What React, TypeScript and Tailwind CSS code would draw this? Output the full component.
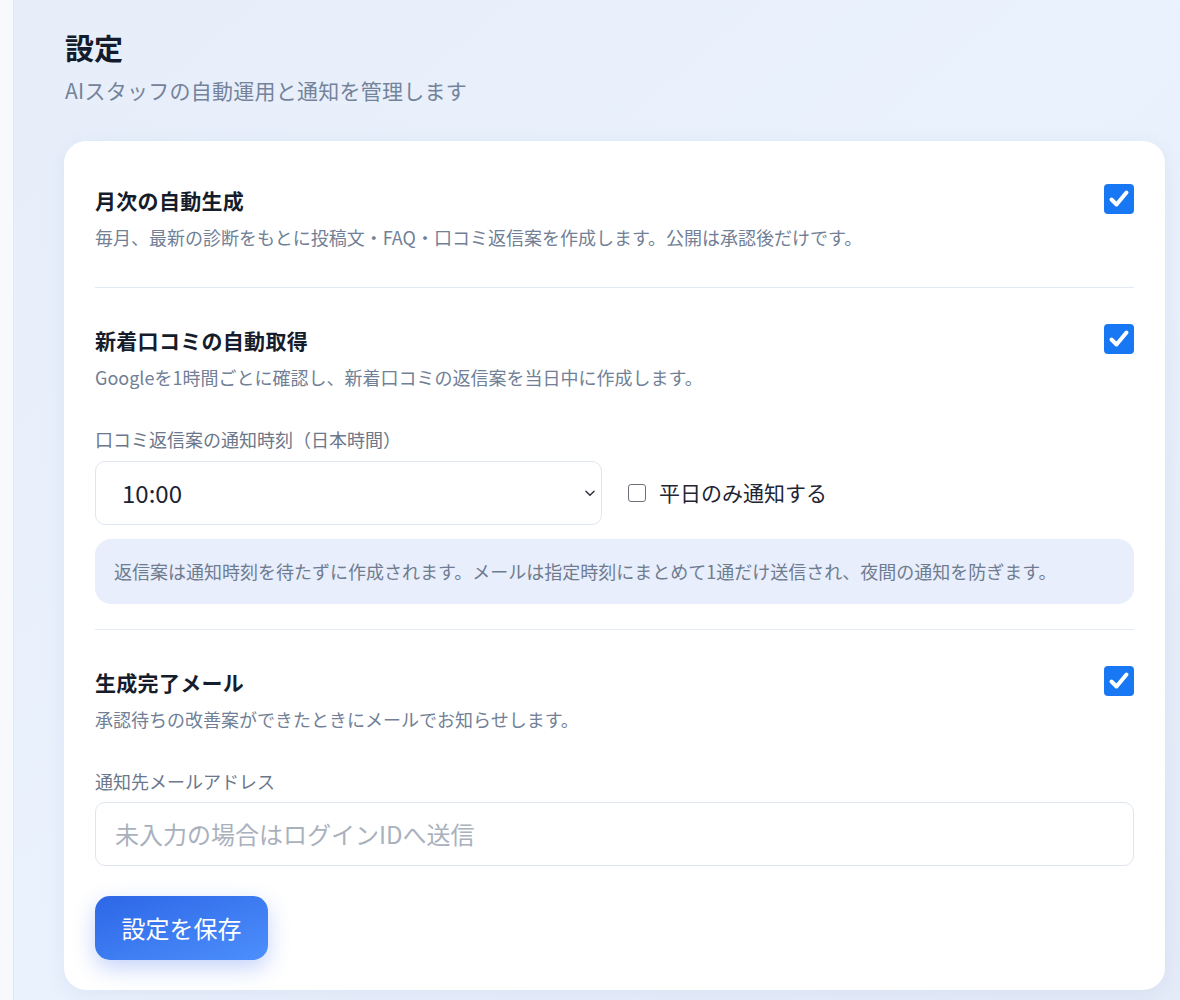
import React from "react";

const font = { fontFamily: '"Noto Sans CJK JP", "Noto Sans", sans-serif' };

function BigCheck() {
  return (
    <div className="w-[30px] h-[30px] rounded-[4px] bg-[#1877f2] flex items-center justify-center shrink-0">
      <svg width="24" height="24" viewBox="0 0 24 24" fill="none">
        <path d="M4.5 12.5l5 5L19.5 5.5" stroke="white" strokeWidth="4" strokeLinecap="round" strokeLinejoin="round" />
      </svg>
    </div>
  );
}

function Section({ title, desc, children }: { title: string; desc: string; children?: React.ReactNode }) {
  return (
    <div>
      <div className="flex items-start justify-between">
        <div>
          <div className="text-[21px] font-bold text-[#151c2b] leading-[30px] tracking-[0.3px]">{title}</div>
          <div className="mt-[9px] text-[18px] text-[#718096] leading-[26px]">{desc}</div>
        </div>
        <div className="-mt-[1px]"><BigCheck /></div>
      </div>
      {children}
    </div>
  );
}

export default function App() {
  return (
    <div style={font} className="flex w-[1180px] h-[1000px] overflow-hidden">
      <div className="w-[14px] shrink-0 bg-[#f7f9fd] border-r border-[#e2e8f2]" />
      <div className="flex-1 bg-gradient-to-br from-[#e7eefa] via-[#eaf2fd] to-[#e4ebf8] pl-[51px] pr-[15px] pt-[27px]">
        <h1 className="text-[29px] font-bold text-[#141b2b] leading-[40px]">設定</h1>
        <p className="mt-[8px] text-[21px] text-[#74839a] leading-[30px] tracking-[0.25px]">AIスタッフの自動運用と通知を管理します</p>
        <div className="mt-[36px] bg-white rounded-[22px] shadow-[0_4px_20px_rgba(120,140,190,0.12)] pl-[31px] pr-[31px] pt-[44px] pb-[30px] -ml-[1px]">
          <Section title="月次の自動生成" desc="毎月、最新の診断をもとに投稿文・FAQ・口コミ返信案を作成します。公開は承認後だけです。" />
          <div className="h-px bg-[#e4eaf3] mt-[37px] mb-[37px]" />
          <Section title="新着口コミの自動取得" desc="Googleを1時間ごとに確認し、新着口コミの返信案を当日中に作成します。">
            <div className="mt-[36px] text-[18px] text-[#6b778a] leading-[26px]">口コミ返信案の通知時刻（日本時間）</div>
            <div className="mt-[9px] flex items-center gap-[26px]">
              <div className="w-[507px] h-[64px] rounded-[10px] border border-[#dfe6f2] flex items-center justify-between pl-[26px] pr-[2px]">
                <span className="text-[24px] text-[#1a2233]">10:00</span>
                <svg width="14" height="14" viewBox="0 0 24 24" fill="none" className="mr-[2px]">
                  <path d="M5 9l7 7 7-7" stroke="#2a2f3a" strokeWidth="2.4" strokeLinecap="round" strokeLinejoin="round" />
                </svg>
              </div>
              <label className="flex items-center gap-[13px]">
                <span className="w-[18px] h-[18px] rounded-[3px] border-[1.5px] border-[#6b6f78] bg-white" />
                <span className="text-[21px] text-[#1e2533]">平日のみ通知する</span>
              </label>
            </div>
            <div className="mt-[14px] rounded-[16px] bg-[#e8eefb] h-[65px] flex items-center px-[19px] text-[18px] text-[#6f7c90] whitespace-nowrap">
              返信案は通知時刻を待たずに作成されます。メールは指定時刻にまとめて1通だけ送信され、夜間の通知を防ぎます。
            </div>
          </Section>
          <div className="h-px bg-[#e4eaf3] mt-[25px] mb-[37px]" />
          <Section title="生成完了メール" desc="承認待ちの改善案ができたときにメールでお知らせします。">
            <div className="mt-[36px] text-[18px] text-[#6b778a] leading-[26px]">通知先メールアドレス</div>
            <div className="mt-[8px] h-[64px] rounded-[10px] border border-[#dfe6f2] flex items-center pl-[19px] text-[24px] text-[#a9b1bd]">
              未入力の場合はログインIDへ送信
            </div>
            <button className="mt-[30px] w-[173px] h-[64px] rounded-[15px] bg-gradient-to-br from-[#2d66e6] to-[#4d8ffc] text-white text-[24px] shadow-[0_8px_22px_rgba(60,110,240,0.3)]">
              設定を保存
            </button>
          </Section>
        </div>
      </div>
    </div>
  );
}
